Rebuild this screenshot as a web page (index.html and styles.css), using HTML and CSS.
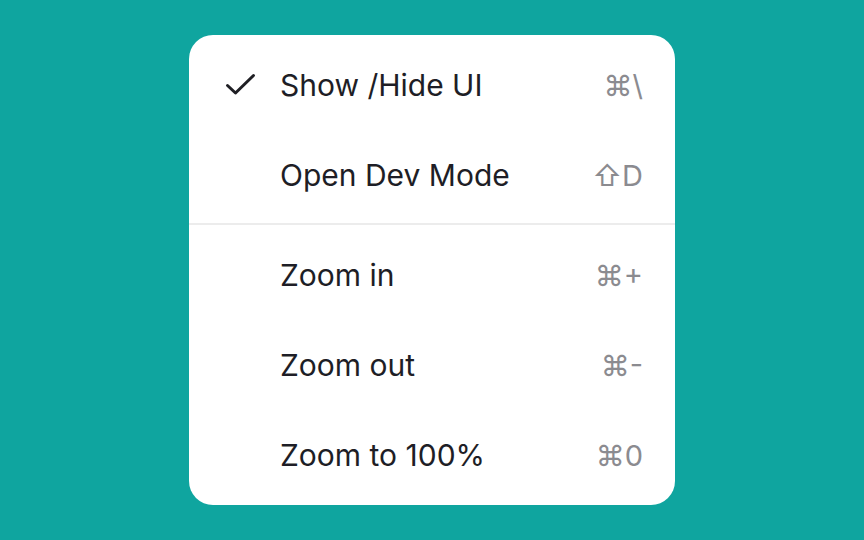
FILE: index.html
```html
<!DOCTYPE html>
<html>
<head>
<meta charset="utf-8">
<link rel="stylesheet" href="styles.css">
</head>
<body>
<div class="menu">
  <div class="section">
    <div class="item">
      <span class="check"><svg width="32" height="24" viewBox="0 0 32 24"><path d="M2.5 12.5 L10.5 20 L28.5 2.5" fill="none" stroke="#1f1f24" stroke-width="3" stroke-linecap="round" stroke-linejoin="round"/></svg></span>
      <span class="label">Show /Hide UI</span>
      <span class="kbd">⌘\</span>
    </div>
    <div class="item">
      <span class="check"></span>
      <span class="label">Open Dev Mode</span>
      <span class="kbd">⇧D</span>
    </div>
  </div>
  <div class="divider"></div>
  <div class="section second">
    <div class="item">
      <span class="check"></span>
      <span class="label">Zoom in</span>
      <span class="kbd">⌘+</span>
    </div>
    <div class="item">
      <span class="check"></span>
      <span class="label">Zoom out</span>
      <span class="kbd">⌘-</span>
    </div>
    <div class="item">
      <span class="check"></span>
      <span class="label">Zoom to 100%</span>
      <span class="kbd">⌘0</span>
    </div>
  </div>
</div>
</body>
</html>
```
FILE: styles.css
```css
html, body {
  margin: 0;
  padding: 0;
}
body {
  width: 864px;
  height: 540px;
  background: #0fa59f;
  font-family: Inter, "Noto Sans", sans-serif;
  display: flex;
  justify-content: center;
  align-items: flex-start;
  padding-top: 35px;
  box-sizing: border-box;
}
.menu {
  width: 486px;
  background: #ffffff;
  border-radius: 24px;
  padding: 5px 0 5px;
  box-sizing: border-box;
}
.section.second {
  padding-top: 3px;
}
.item {
  height: 90px;
  display: flex;
  align-items: center;
  padding: 0 32px 0 36px;
}
.check {
  width: 55px;
  display: flex;
  align-items: center;
}
.label {
  flex: 1;
  font-size: 30px;
  color: #1e1e26;
}
.kbd {
  font-size: 29px;
  color: #8b8b90;
  font-family: Inter, "DejaVu Sans", sans-serif;
}
.divider {
  height: 2px;
  margin: 3px 0 2px;
  background: #ececec;
}
```
